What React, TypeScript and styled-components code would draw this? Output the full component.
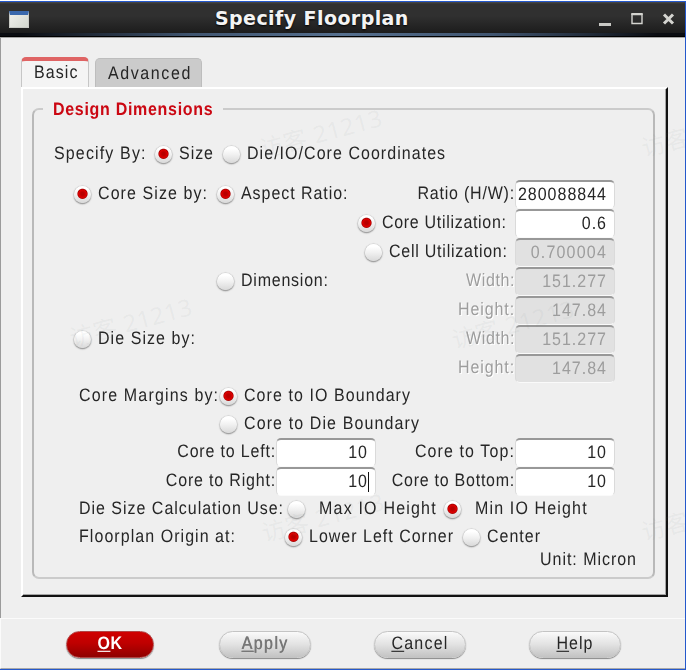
import React from "react";
import styled, { createGlobalStyle, css } from "styled-components";

const GlobalStyle = createGlobalStyle`
  * { box-sizing: border-box; }
  body { margin: 0; background: #fff; overflow: hidden; }
`;

const Window = styled.div`
  position: relative;
  width: 686px;
  height: 669px;
  margin-top: 1px;
  display: flex;
  flex-direction: column;
  background: #efefef;
  border: solid #2458cc;
  border-width: 1px 1px 1px 0;
  overflow: hidden;
  color: #262626;
  font: 16px "Liberation Sans", Arial, sans-serif;
  white-space: nowrap;
`;

const TitleBar = styled.header`
  flex: none;
  height: 36px;
  display: grid;
  grid-template-columns: 40px 1fr 88px;
  align-items: center;
  padding: 0 0 3px 9px;
  background:
    linear-gradient(90deg, #0b0d12 3%, #405570 28%, #56708f 50%, #405570 72%, #0b0d12 96%) 0 31px / 100% 3px no-repeat,
    linear-gradient(#4a4a4a 0, #303030 2px, #303030 14px, #1c1c1c 31px, #000 33px);
  border-bottom: 1px solid #a5a5a5;
`;

const Title = styled.h1`
  margin: 0;
  padding-left: 166px;
  color: #f4f4f4;
  font: bold 19px/28px "DejaVu Sans", sans-serif;
  letter-spacing: 0.42px;
  text-shadow: 0 1px 2px #000;
`;

const WindowIcon = styled.span`
  width: 20px;
  height: 17px;
  margin-top: 3px;
  border: 1px solid #c9cac5;
  border-top: 4px solid #3a68ad;
  background: linear-gradient(135deg, #eeeeea, #d3d7cf);
`;

const Body = styled.main`
  flex: none;
  height: 580px;
  padding: 19px 18px 0 20px;
  border-left: 1px solid #9b9b9b;
`;

const Tabs = styled.nav`
  display: flex;
  align-items: flex-end;
  gap: 6px;
  height: 30px;
`;

const Tab = styled.div<{ $active?: boolean }>`
  width: ${(p) => (p.$active ? 68 : 107)}px;
  height: ${(p) => (p.$active ? 30 : 29)}px;
  padding: ${(p) => (p.$active ? "1px 0 0 12px" : "4px 0 0 12px")};
  border: 1px solid ${(p) => (p.$active ? "#c6c6c6" : "#bdbdbd")};
  border-bottom: 0;
  border-radius: 5px 5px 0 0;
  background: ${(p) => (p.$active ? "#f4f4f4" : "#cbcbcb")};
  ${(p) =>
    p.$active &&
    css`
      border-top: 4px solid #df6464;
    `}
`;

const Panel = styled.section`
  width: 647px;
  height: 510px;
  padding: 9px 9px 0;
  border: 2px solid;
  border-color: #fff #111 #111 #fff;
  box-shadow: inset -1px -1px #a5a5a5;
`;

const Group = styled.fieldset`
  min-width: 0;
  width: 623px;
  height: 480px;
  margin: 1px 0 0 0;
  padding: 20px 0 0;
  border: 2px solid #cbcbcb;
  border-left-color: #b9b9b9;
  border-right-color: #b9b9b9;
  border-radius: 7px;
`;

const Legend = styled.legend`
  height: 20px;
  margin-left: 9px;
  padding: 0 10px;
  color: #cb0712;
`;

const Row = styled.div<{ $h?: number; $left?: number; $after?: number; $cols: string }>`
  display: grid;
  grid-template-columns: ${(p) => p.$cols};
  grid-template-rows: ${(p) => (p.$h ?? 29) - 2}px;
  align-items: center;
  height: ${(p) => p.$h ?? 29}px;
  margin-bottom: ${(p) => p.$after ?? 0}px;
  padding: 0 0 2px ${(p) => p.$left ?? 0}px;
`;

/* Tall, narrow lettering: 16px glyphs stretched vertically. */
const Text = styled.span<{ $track: number; $right?: boolean; $dim?: boolean; $bold?: boolean }>`
  display: inline-block;
  line-height: 22px;
  letter-spacing: ${(p) => p.$track}px;
  font-weight: ${(p) => (p.$bold ? "bold" : "normal")};
  text-rendering: geometricPrecision;
  transform: scaleY(1.125);
  ${(p) => p.$right && "text-align: right;"}
  ${(p) => p.$dim && "color: #9d9d9d; text-shadow: 1px 1px #fff;"}
`;

const Choice = styled.label<{ $gap?: number }>`
  display: flex;
  align-items: center;
  gap: ${(p) => p.$gap ?? 7}px;
`;

const Dot = styled.i<{ $on?: boolean }>`
  flex: none;
  width: 17px;
  height: 17px;
  margin: 1px 0 0 1px;
  border-radius: 50%;
  background: ${(p) => (p.$on ? "radial-gradient(circle at 50% 46%, #b80000 0 1.5px, #e00000 4px, #a80000 4.6px, transparent 5.6px), " : "")}
    linear-gradient(#ffffff 15%, #f1f1f1 50%, #d9d9d9);
  box-shadow: 0 0 1px 0.5px #c4c4c4, 0 1px 1.5px #666;
`;

const FieldBox = styled.div<{ $dim?: boolean }>`
  display: flex;
  justify-content: flex-end;
  align-items: center;
  align-self: start;
  height: 29px;
  padding: 0 7px 0 1px;
  overflow: hidden;
  border: 1px solid #dadada;
  border-top: 2px solid #989898;
  border-bottom-color: #fafafa;
  border-radius: 5px;
  background: ${(p) => (p.$dim ? "#e1e1e1" : "#fff")};
  color: ${(p) => (p.$dim ? "#9d9d9d" : "#262626")};
`;

const Caret = styled.i`
  width: 1px;
  height: 20px;
  margin: 0 -1px 0 0;
  background: #111;
`;

const Footer = styled.footer`
  flex: 1;
  display: grid;
  grid-template-columns: 88px 92px 92px 92px;
  column-gap: 63px;
  align-items: start;
  padding: 12px 0 0 65px;
  border-top: 1px solid #fbfbfb;
  border-left: 1px solid #fbfbfb;
  border-bottom: 1px solid #a9a9a9;
`;

const Button = styled.button<{ $primary?: boolean; $dim?: boolean; $shift?: number }>`
  height: 27px;
  margin: 0 ${(p) => -(p.$shift ?? 0)}px 0 ${(p) => p.$shift ?? 0}px;
  padding: 0 0 2px;
  border: 1px solid #c4c4c4;
  border-radius: 14px;
  background: linear-gradient(#fafafa, #e2e2e2 50%, #c3c3c3);
  box-shadow: 0 1px 1px #888;
  color: ${(p) => (p.$dim ? "#777" : "#262626")};
  font: 16px/22px "Liberation Sans", Arial, sans-serif;
  ${(p) => p.$dim && "text-shadow: 0.5px 0 #777;"}
  ${(p) =>
    p.$primary &&
    css`
      border-color: #b24444;
      background: linear-gradient(#d00000, #be0000 45%, #8f0000);
      color: #fff;
    `}
  u { text-underline-offset: 2px; text-decoration-thickness: 1px; }
`;

const Watermark = styled.span<{ $x: number; $y: number }>`
  position: absolute;
  left: ${(p) => p.$x}px;
  top: ${(p) => p.$y}px;
  color: rgba(120, 130, 130, 0.075);
  font: 23.5px/26px "Noto Sans", "Noto Sans CJK SC", sans-serif;
  letter-spacing: 0.7px;
  transform: rotate(-15deg);
  pointer-events: none;
`;

type RadioProps = { on?: boolean; track: number; gap?: number; children: string };
const Radio = ({ on, track, gap, children }: RadioProps) => (
  <Choice $gap={gap}>
    <Dot $on={on} />
    <Text $track={track}>{children}</Text>
  </Choice>
);

type FieldProps = { dim?: boolean; caret?: boolean; track?: number; children: string };
const Field = ({ dim, caret, track = 1, children }: FieldProps) => (
  <FieldBox $dim={dim}>
    <Text $track={track}>{children}</Text>
    {caret && <Caret />}
  </FieldBox>
);

const marks: [number, number, string][] = [
  [258, 118, "访客 21213"],
  [68, 307, "访客 21213"],
  [450, 309, "访客 21213"],
  [260, 502, "访客 21213"],
  [641, 127, "访客"],
  [641, 511, "访客"],
];

export default function App() {
  return (
    <>
      <GlobalStyle />
      <Window>
        <TitleBar>
          <WindowIcon />
          <Title>Specify Floorplan</Title>
          <svg width="88" height="16" viewBox="0 0 88 16" fill="none" stroke="#d4d4d0">
            <path d="M2 14.5h12" stroke="#c9c9c5" strokeWidth="3" />
            <path d="M35 4.5h10v9H35z" strokeWidth="1.4" />
            <path d="M34.3 4h11.4" strokeWidth="2" />
            <path d="m67 4.5 9 9m0-9-9 9" strokeWidth="3" />
          </svg>
        </TitleBar>
        <Body>
          <Tabs>
            <Tab $active><Text $track={1.1}>Basic</Text></Tab>
            <Tab><Text $track={1.6}>Advanced</Text></Tab>
          </Tabs>
          <Panel>
            <Group>
              <Legend><Text $bold $track={0.7}>Design Dimensions</Text></Legend>
              <Row $h={32} $left={20} $after={9} $cols="100px 68px 1fr">
                <Text $track={1.15}>Specify By:</Text>
                <Radio on track={0.96}>Size</Radio>
                <Radio track={1.04}>Die/IO/Core Coordinates</Radio>
              </Row>
              <Row $left={39} $cols="143px 140px 159px 100px">
                <Radio on track={1.08}>Core Size by:</Radio>
                <Radio on track={0.95}>Aspect Ratio:</Radio>
                <Text $right $track={0.8}>Ratio (H/W):</Text>
                <Field>280088844</Field>
              </Row>
              <Row $left={323} $cols="158px 100px">
                <Radio on track={0.69}>Core Utilization:</Radio>
                <Field>0.6</Field>
              </Row>
              <Row $left={330} $cols="151px 100px">
                <Radio track={0.76}>Cell Utilization:</Radio>
                <Field dim track={1.2}>0.700004</Field>
              </Row>
              <Row $left={182} $cols="140px 159px 100px">
                <Radio track={0.77}>Dimension:</Radio>
                <Text $right $dim $track={0.6}>Width:</Text>
                <Field dim>151.277</Field>
              </Row>
              <Row $left={322} $cols="159px 100px">
                <Text $right $dim $track={0.9}>Height:</Text>
                <Field dim>147.84</Field>
              </Row>
              <Row $left={39} $cols="283px 159px 100px">
                <Radio track={1.06}>Die Size by:</Radio>
                <Text $right $dim $track={0.6}>Width:</Text>
                <Field dim>151.277</Field>
              </Row>
              <Row $left={322} $cols="159px 100px">
                <Text $right $dim $track={0.9}>Height:</Text>
                <Field dim>147.84</Field>
              </Row>
              <Row $h={28} $left={45} $cols="140px 1fr">
                <Text $track={1.15}>Core Margins by:</Text>
                <Radio on track={1.07}>Core to IO Boundary</Radio>
              </Row>
              <Row $h={27} $left={185} $cols="1fr">
                <Radio track={1.11}>Core to Die Boundary</Radio>
              </Row>
              <Row $left={123} $cols="119px 100px 139px 100px">
                <Text $right $track={0.82}>Core to Left:</Text>
                <Field>10</Field>
                <Text $right $track={1.1}>Core to Top:</Text>
                <Field>10</Field>
              </Row>
              <Row $left={123} $cols="119px 100px 139px 100px">
                <Text $right $track={0.82}>Core to Right:</Text>
                <Field caret>10</Field>
                <Text $right $track={0.75}>Core to Bottom:</Text>
                <Field>10</Field>
              </Row>
              <Row $h={28} $left={45} $cols="208px 156px 1fr">
                <Text $track={0.98}>Die Size Calculation Use:</Text>
                <Radio gap={14} track={1.2}>Max IO Height</Radio>
                <Radio on gap={14} track={1.15}>Min IO Height</Radio>
              </Row>
              <Row $h={27} $left={45} $cols="205px 178px 1fr">
                <Text $track={1.05}>Floorplan Origin at:</Text>
                <Radio on track={1}>Lower Left Corner</Radio>
                <Radio track={1}>Center</Radio>
              </Row>
              <Row $h={20} $left={506} $cols="1fr">
                <Text $track={0.97}>Unit: Micron</Text>
              </Row>
            </Group>
          </Panel>
        </Body>
        <Footer>
          <Button $primary><Text $bold $track={0.5}><u>O</u>K</Text></Button>
          <Button $dim $shift={2}><Text $track={1.4}><u>A</u>pply</Text></Button>
          <Button $shift={2}><Text $track={1.24}><u>C</u>ancel</Text></Button>
          <Button $shift={2}><Text $track={1.03}><u>H</u>elp</Text></Button>
        </Footer>
        {marks.map(([x, y, label]) => (
          <Watermark key={`${x}-${y}`} $x={x} $y={y}>{label}</Watermark>
        ))}
      </Window>
    </>
  );
}
